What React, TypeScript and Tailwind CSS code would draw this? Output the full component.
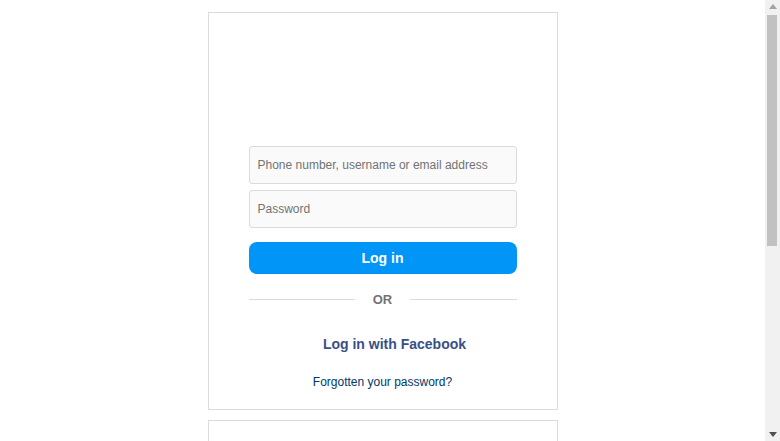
import React from "react";

function Scrollbar() {
  return (
    <div className="flex h-[441px] w-[15px] shrink-0 flex-col bg-[#f1f1f1]">
      <div className="flex h-[15px] items-center justify-center">
        <svg width="8" height="5" viewBox="0 0 8 5" className="mt-[-2px]">
          <polygon points="4,0 8,5 0,5" fill="#a3a3a3" />
        </svg>
      </div>
      <div className="ml-[2px] h-[231px] w-[10px] bg-[#c1c1c1]" />
      <div className="flex-1" />
      <div className="flex h-[15px] items-center justify-center">
        <svg width="8" height="5" viewBox="0 0 8 5" className="mt-[2px]">
          <polygon points="0,0 8,0 4,5" fill="#505050" />
        </svg>
      </div>
    </div>
  );
}

export default function App() {
  return (
    <div
      className="flex h-[441px] w-full overflow-hidden bg-white"
      style={{ fontFamily: '"Liberation Sans", Arial, sans-serif' }}
    >
      <div className="h-[441px] flex-1 overflow-hidden">
        <div className="flex min-h-[785px] w-full flex-col items-center bg-white pt-[12px]">
          <div className="flex w-[350px] flex-col border border-[#dbdbdb] bg-white">
            <div className="h-[133px]" />
            <form className="flex flex-col px-[40px]" onSubmit={(e) => e.preventDefault()}>
              <input
                type="text"
                placeholder="Phone number, username or email address"
                className="h-[38px] w-full rounded-[3px] border border-[#dbdbdb] bg-[#fafafa] px-[8px] text-[12px] text-[#262626] outline-none placeholder:text-[#737373]"
              />
              <input
                type="password"
                placeholder="Password"
                className="mt-[6px] h-[38px] w-full rounded-[3px] border border-[#dbdbdb] bg-[#fafafa] px-[8px] text-[12px] text-[#262626] outline-none placeholder:text-[#737373]"
              />
              <button
                type="submit"
                className="mt-[14px] h-[32px] w-full rounded-[8px] bg-[#0095f6] text-[14px] font-bold text-white"
              >
                Log in
              </button>
              <div className="mt-[18px] flex h-[15px] items-center">
                <div className="h-px flex-1 bg-[#dbdbdb]" />
                <div className="mx-[18px] text-[13px] font-bold leading-[15px] text-[#737373]">OR</div>
                <div className="h-px flex-1 bg-[#dbdbdb]" />
              </div>
              <div className="mt-[28px] flex h-[18px] items-center justify-center">
                <span className="mr-[8px] inline-block h-[16px] w-[16px]" />
                <span className="text-[14px] font-bold leading-[18px] text-[#385185]">Log in with Facebook</span>
              </div>
              <div className="mb-[20px] mt-[22px] text-center text-[12px] leading-[14px] text-[#00376b]">
                Forgotten your password?
              </div>
            </form>
          </div>
          <div className="mt-[10px] h-[63px] w-[350px] border border-[#dbdbdb] bg-white" />
        </div>
      </div>
      <Scrollbar />
    </div>
  );
}
